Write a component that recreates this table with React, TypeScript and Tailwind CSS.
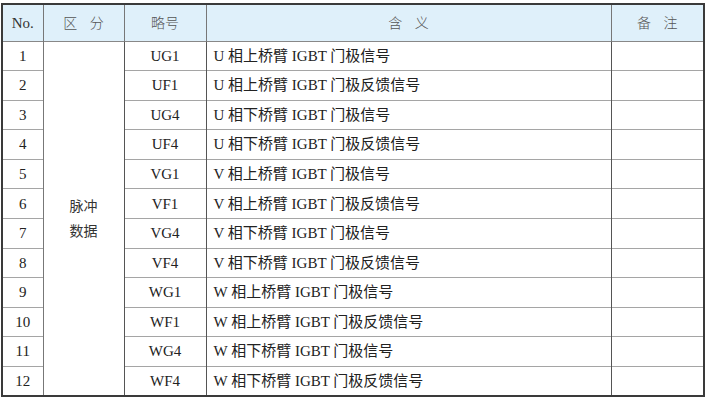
const rows = [
  ['1', 'UG1', 'U 相上桥臂 IGBT 门极信号'],
  ['2', 'UF1', 'U 相上桥臂 IGBT 门极反馈信号'],
  ['3', 'UG4', 'U 相下桥臂 IGBT 门极信号'],
  ['4', 'UF4', 'U 相下桥臂 IGBT 门极反馈信号'],
  ['5', 'VG1', 'V 相上桥臂 IGBT 门极信号'],
  ['6', 'VF1', 'V 相上桥臂 IGBT 门极反馈信号'],
  ['7', 'VG4', 'V 相下桥臂 IGBT 门极信号'],
  ['8', 'VF4', 'V 相下桥臂 IGBT 门极反馈信号'],
  ['9', 'WG1', 'W 相上桥臂 IGBT 门极信号'],
  ['10', 'WF1', 'W 相上桥臂 IGBT 门极反馈信号'],
  ['11', 'WG4', 'W 相下桥臂 IGBT 门极信号'],
  ['12', 'WF4', 'W 相下桥臂 IGBT 门极反馈信号'],
];

const serif = "font-['Liberation_Serif','Noto_Sans_CJK_SC',serif]";
const sans = "font-['Noto_Sans_CJK_SC',sans-serif]";

export default function App() {
  return (
    <div className="h-[397px] w-[706px] bg-white pl-[1px] pt-[3px]">
      <table className={`w-[702px] table-fixed border-collapse border-2 border-[#3a3a3a] text-[15px] text-[#222] ${serif}`}>
        <colgroup>
          <col className="w-[41px]" />
          <col className="w-[81px]" />
          <col className="w-[82px]" />
          <col className="w-[405px]" />
          <col className="w-[93px]" />
        </colgroup>
        <thead>
          <tr className="h-[37px] bg-[#dff0fa] border-b border-[#888]">
            <th className="border-r border-[#777] p-0 text-[15px] font-normal text-[#333]">No.</th>
            <th className={`border-r border-[#777] p-0 text-[14px] font-light text-[#555] ${sans}`}>
              <span className="tracking-[0.9em] pl-[0.9em]">区分</span>
            </th>
            <th className={`border-r border-[#777] p-0 text-[14px] font-light text-[#555] ${sans}`}>略号</th>
            <th className={`border-r border-[#777] p-0 text-[14px] font-light text-[#555] ${sans}`}>
              <span className="tracking-[0.9em] pl-[0.9em]">含义</span>
            </th>
            <th className={`p-0 text-[14px] font-light text-[#555] ${sans}`}>
              <span className="tracking-[0.9em] pl-[0.9em]">备注</span>
            </th>
          </tr>
        </thead>
        <tbody>
          {rows.map(([no, code, desc], i) => (
            <tr key={no} className="h-[29.6px] border-b border-[#a5a5a5]">
              <td className="border-r border-[#777] p-0 text-center">{no}</td>
              {i === 0 && (
                <td rowSpan={12} className={`border-r border-[#555] p-0 text-center text-[14px] leading-[25px] text-[#333] ${sans}`}>
                  脉冲
                  <br />
                  数据
                </td>
              )}
              <td className="border-r border-[#555] p-0 text-center">{code}</td>
              <td className="border-r border-[#555] p-0 pl-[7px] text-left">{desc}</td>
              <td className="p-0" />
            </tr>
          ))}
        </tbody>
      </table>
    </div>
  );
}
